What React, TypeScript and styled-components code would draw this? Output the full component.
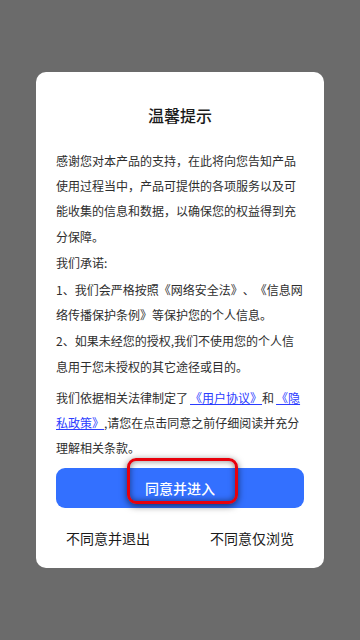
import React from "react";
import styled, { createGlobalStyle } from "styled-components";

const GlobalStyle = createGlobalStyle`
  html, body {
    margin: 0;
    padding: 0;
    background: #6b6b6b;
  }
  * {
    box-sizing: border-box;
  }
`;

const Overlay = styled.div`
  min-height: 100vh;
  background: #6b6b6b;
  display: flex;
  flex-direction: column;
  align-items: center;
  padding-top: 72px;
  font-family: "Noto Sans CJK SC", "Noto Sans", sans-serif;
  text-spacing-trim: space-all;
`;

const Dialog = styled.div`
  width: 288px;
  background: #ffffff;
  border-radius: 10px;
  padding: 31px 20px 20px;
  display: flex;
  flex-direction: column;
`;

const Title = styled.h2`
  margin: 0 0 21px;
  height: 24px;
  font-size: 16px;
  line-height: 24px;
  font-weight: 500;
  color: #1a1a1a;
  text-align: center;
`;

const Body = styled.div`
  font-size: 12px;
  line-height: 25.2px;
  color: #2e2e2e;
  text-spacing-trim: space-all;
`;

const Para = styled.p<{ $gap?: number }>`
  margin: ${(p) => p.$gap ?? 1}px 0 0;
  &:first-child {
    margin-top: 0;
  }
`;

const Link = styled.a`
  color: #2b3cff;
  text-decoration: underline;
  cursor: pointer;
  padding-left: 2px;
`;

const Primary = styled.button`
  position: relative;
  margin-top: 8px;
  height: 40px;
  width: 100%;
  border: none;
  border-radius: 9px;
  background: #3370ff;
  color: #ffffff;
  font-family: inherit;
  font-size: 14px;
  font-weight: 500;
  display: flex;
  align-items: center;
  justify-content: center;
`;

const Highlight = styled.span`
  position: absolute;
  left: 71px;
  top: -10px;
  width: 111px;
  height: 46px;
  border: 3px solid #e8000b;
  border-radius: 9px;
  box-shadow: 0 2px 7px rgba(0, 0, 0, 0.6), inset 0 0 6px rgba(0, 0, 0, 0.5);
  pointer-events: none;
`;

const Actions = styled.div`
  display: flex;
  justify-content: space-between;
  padding: 0 10px;
  margin-top: 20px;
  height: 20px;
`;

const TextButton = styled.button`
  border: none;
  background: none;
  padding: 0;
  height: 20px;
  display: flex;
  align-items: center;
  font-family: inherit;
  font-size: 14px;
  line-height: 20px;
  color: #1a1a1a;
`;

export default function App() {
  return (
    <>
      <GlobalStyle />
      <Overlay>
        <Dialog>
          <Title>温馨提示</Title>
          <Body>
            <Para>
              感谢您对本产品的支持，在此将向您告知产品使用过程当中，产品可提供的各项服务以及可能收集的信息和数据，以确保您的权益得到充分保障。
            </Para>
            <Para>我们承诺:</Para>
            <Para $gap={2}>1、我们会严格按照《网络安全法》、《信息网络传播保护条例》等保护您的个人信息。</Para>
            <Para>2、如果未经您的授权,我们不使用您的个人信息用于您未授权的其它途径或目的。</Para>
            <Para $gap={6}>
              我们依据相关法律制定了<Link>《用户协议》</Link>和<Link>《隐私政策》</Link>,请您在点击同意之前仔细阅读并充分理解相关条款。
            </Para>
          </Body>
          <Primary>
            同意并进入
            <Highlight />
          </Primary>
          <Actions>
            <TextButton>不同意并退出</TextButton>
            <TextButton>不同意仅浏览</TextButton>
          </Actions>
        </Dialog>
      </Overlay>
    </>
  );
}
